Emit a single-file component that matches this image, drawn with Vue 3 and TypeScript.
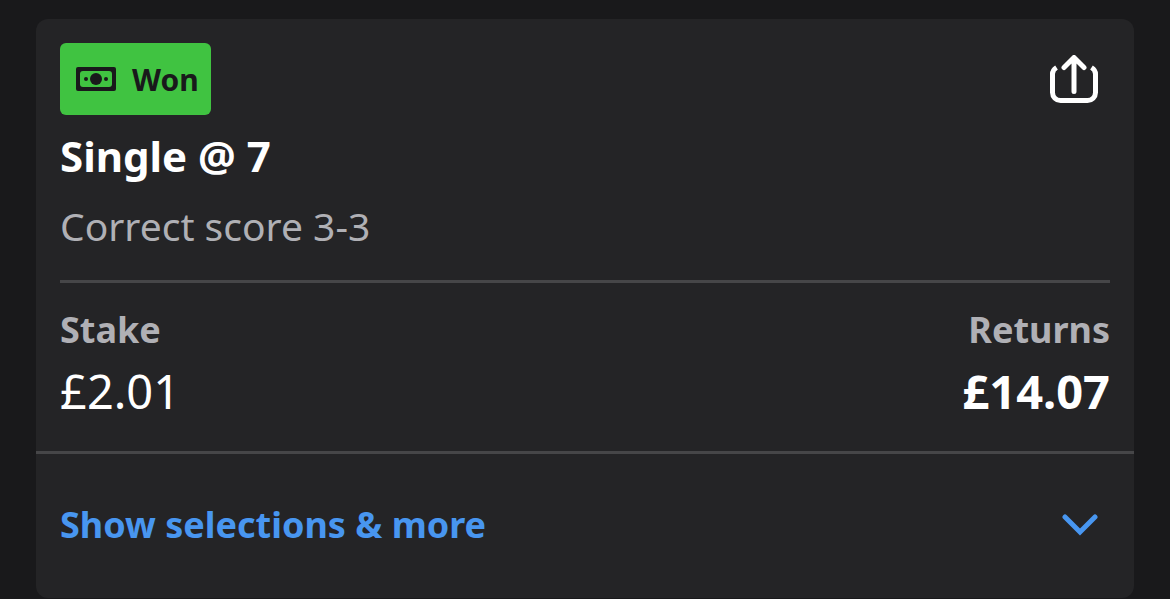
<script setup lang="ts">
import { ref } from 'vue'

interface Bet {
  status: string
  title: string
  market: string
  stake: string
  returns: string
}

const bet: Bet = {
  status: 'Won',
  title: 'Single @ 7',
  market: 'Correct score 3-3',
  stake: '£2.01',
  returns: '£14.07',
}

const expanded = ref(false)
</script>

<template>
  <main class="page">
    <article class="card">
      <section class="summary">
        <header class="top">
          <span class="badge">
            <svg class="note" viewBox="0 0 40 24" aria-hidden="true">
              <rect width="40" height="24" rx="2" fill="#19191b" />
              <rect x="4" y="4" width="32" height="16" rx="3" fill="#40c341" />
              <circle cx="20" cy="12" r="6" fill="#19191b" />
              <circle cx="10" cy="12" r="2" fill="#19191b" />
              <circle cx="30" cy="12" r="2" fill="#19191b" />
            </svg>
            {{ bet.status }}
          </span>
          <button class="share" type="button" aria-label="Share bet">
            <svg viewBox="0 0 48 48" aria-hidden="true">
              <g fill="none" stroke="#fff" stroke-width="5" stroke-linejoin="round">
                <path d="M6.500 12.500Q2.500 15 2.500 19V37.500A8 8 0 0 0 10.500 45.500H37.500A8 8 0 0 0 45.500 37.500V19Q45.500 15 41.500 12.500" />
                <path d="M14 12.500L24 2.500L34 12.500M24 3.500V36.500" stroke-linecap="round" />
              </g>
            </svg>
          </button>
        </header>
        <h1 class="title">{{ bet.title }}</h1>
        <p class="market">{{ bet.market }}</p>
        <dl class="amounts">
          <div class="amount">
            <dt>Stake</dt>
            <dd>{{ bet.stake }}</dd>
          </div>
          <div class="amount returns">
            <dt>Returns</dt>
            <dd>{{ bet.returns }}</dd>
          </div>
        </dl>
      </section>
      <button class="more" type="button" :aria-expanded="expanded" @click="expanded = !expanded">
        Show selections &amp; more
        <svg class="chevron" viewBox="0 0 36 22" aria-hidden="true">
          <path d="M3 3L18 18L33 3" fill="none" stroke="#4896f0" stroke-width="5" stroke-linecap="round" />
        </svg>
      </button>
    </article>
  </main>
</template>

<style>
body {
  background: #19191b;
}
</style>

<style scoped>
.page {
  padding: 19px 36px 1px;
  font-family: "Noto Sans", sans-serif;
  color: #fff;
}

.card {
  background: #242426;
  border-radius: 12px;
}

.summary {
  padding: 24px 24px 0;
}

.top {
  display: flex;
  align-items: center;
  justify-content: space-between;
}

.badge {
  display: flex;
  align-items: center;
  gap: 16px;
  height: 72px;
  padding: 0 12px 0 16px;
  box-sizing: border-box;
  border-radius: 6px;
  background: #40c341;
  color: #19191b;
  font-size: 30px;
  font-weight: 700;
}

.note {
  width: 40px;
  height: 24px;
}

button {
  border: 0;
  background: none;
  font-family: inherit;
  cursor: pointer;
}

.share {
  width: 48px;
  height: 48px;
  margin-right: 12px;
  padding: 0;
}

.share svg {
  display: block;
}

.title {
  margin: 8px 0;
  font-size: 42px;
  line-height: 66px;
  font-weight: 700;
}

.market {
  margin: 0;
  padding-bottom: 25px;
  border-bottom: 3px solid #464648;
  color: #b0b0b5;
  font-size: 39px;
  line-height: 58px;
}

.amounts {
  display: flex;
  justify-content: space-between;
  margin: 0;
  padding: 21px 0 25px;
}

.amount dt {
  color: #b0b0b5;
  font-size: 36px;
  line-height: 52px;
  font-weight: 700;
}

.amount dd {
  margin: 0;
  font-size: 47px;
  line-height: 70px;
}

.returns {
  text-align: right;
}

.returns dd {
  font-weight: 700;
}

.more {
  display: flex;
  align-items: center;
  justify-content: space-between;
  width: 100%;
  padding: 45px 36px 47px 24px;
  border-top: 3px solid #464648;
  color: #4896f0;
  font-size: 36px;
  line-height: 52px;
  font-weight: 700;
  text-align: left;
}

.chevron {
  width: 36px;
  height: 22px;
}
</style>
